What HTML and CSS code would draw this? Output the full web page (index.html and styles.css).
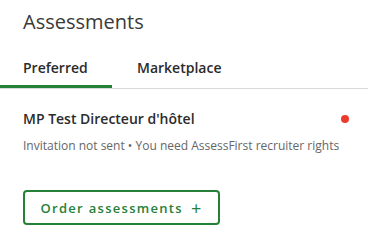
FILE: index.html
```html
<!DOCTYPE html>
<html lang="en">
<head>
    <meta charset="UTF-8">
    <meta name="viewport" content="width=device-width, initial-scale=1.0">
    <title>Assessments</title>
    <link rel="stylesheet" href="styles.css">
</head>
<body>

<div id="panel">
    <h1 id="title">Assessments</h1>

    <div id="tabs">
        <div class="tab active">Preferred</div>
        <div class="tab">Marketplace</div>
    </div>

    <div id="assessment">
        <div class="assessment-head">
            <p class="assessment-name">MP Test Directeur d'hôtel</p>
            <span class="status-dot"></span>
        </div>
        <p class="assessment-info">Invitation not sent • You need AssessFirst recruiter rights</p>
    </div>

    <button id="order-button">Order assessments <span class="plus">+</span></button>
</div>

</body>
</html>
```

FILE: styles.css
```css
body {
    margin: 0;
    padding: 0;
    background-color: #fff;
    color: #333;
    font-family: 'Open Sans', sans-serif;
}

#panel {
    width: 368px;
}

#title {
    margin: 0;
    padding: 8px 23px 0;
    font-size: 20px;
    font-weight: 400;
    line-height: 28px;
    color: #3a3a3a;
}

#tabs {
    display: flex;
    margin-top: 22px;
    border-bottom: 1px solid #d9d9d9;
}

.tab {
    padding: 0 23px 7px 25px;
    font-size: 14px;
    font-weight: 600;
    line-height: 20px;
    color: #2b2b2b;
    border-bottom: 3px solid transparent;
}

.tab.active {
    width: 66px;
    padding-left: 23px;
    border-bottom-color: #268038;
}

#assessment {
    padding: 20px 23px 0;
}

.assessment-head {
    display: flex;
    justify-content: space-between;
    align-items: center;
}

.assessment-name {
    margin: 0;
    font-size: 14px;
    font-weight: 600;
    line-height: 20px;
    color: #2b2b2b;
}

.status-dot {
    width: 8px;
    height: 8px;
    border-radius: 50%;
    background-color: #ee3a2c;
    margin-right: -4px;
}

.assessment-info {
    margin: 8px 0 0;
    font-size: 12px;
    line-height: 18px;
    color: #666;
}

#order-button {
    display: flex;
    align-items: center;
    justify-content: center;
    margin: 35px 0 0 23px;
    width: 197px;
    height: 35px;
    padding: 0;
    background-color: #fff;
    border: 2px solid #268038;
    border-radius: 4px;
    color: #268038;
    font-family: 'Open Sans', sans-serif;
    font-size: 13px;
    font-weight: 600;
    letter-spacing: 1.3px;
    cursor: pointer;
}

.plus {
    margin-left: 8px;
    font-size: 18px;
    font-weight: 400;
}
```
